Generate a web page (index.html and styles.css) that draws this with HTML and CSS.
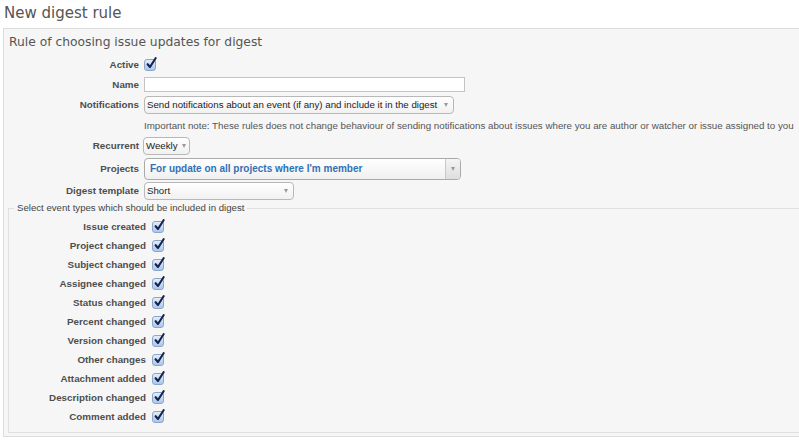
FILE: index.html
```html
<!DOCTYPE html>
<html>
<head>
<meta charset="utf-8">
<title>New digest rule</title>
<link rel="stylesheet" href="styles.css">
</head>
<body>
<h2 class="title">New digest rule</h2>
<div class="box">
  <h3 class="box-title">Rule of choosing issue updates for digest</h3>
  <div class="row r-active"><label>Active</label><span class="cb"><svg viewBox="0 0 12 14" width="12" height="14"><path d="M2.6 8.2 L5 11 L10.6 2.2" fill="none" stroke="#14224e" stroke-width="2.1" stroke-linecap="round" stroke-linejoin="round"/></svg></span></div>
  <div class="row r-name"><label>Name</label><span class="input"></span></div>
  <div class="row r-notif"><label>Notifications</label><span class="select s-notif"><span class="stext">Send notifications about an event (if any) and include it in the digest</span><span class="caret"></span></span></div>
  <div class="row r-note"><span class="note">Important note: These rules does not change behaviour of sending notifications about issues where you are author or watcher or issue assigned to you</span></div>
  <div class="row r-rec"><label>Recurrent</label><span class="select s-rec"><span class="stext">Weekly</span><span class="caret"></span></span></div>
  <div class="row r-proj"><label>Projects</label><span class="select2"><span class="s2text">For update on all projects where I'm member</span><span class="s2arrow"><span class="caret"></span></span></span></div>
  <div class="row r-tpl"><label>Digest template</label><span class="select s-tpl"><span class="stext">Short</span><span class="caret"></span></span></div>

  <fieldset class="events">
    <legend>Select event types which should be included in digest</legend>
    <div class="row ev"><label>Issue created</label><span class="cb"><svg viewBox="0 0 12 14" width="12" height="14"><path d="M2.6 8.2 L5 11 L10.6 2.2" fill="none" stroke="#14224e" stroke-width="2.1" stroke-linecap="round" stroke-linejoin="round"/></svg></span></div>
    <div class="row ev"><label>Project changed</label><span class="cb"><svg viewBox="0 0 12 14" width="12" height="14"><path d="M2.6 8.2 L5 11 L10.6 2.2" fill="none" stroke="#14224e" stroke-width="2.1" stroke-linecap="round" stroke-linejoin="round"/></svg></span></div>
    <div class="row ev"><label>Subject changed</label><span class="cb"><svg viewBox="0 0 12 14" width="12" height="14"><path d="M2.6 8.2 L5 11 L10.6 2.2" fill="none" stroke="#14224e" stroke-width="2.1" stroke-linecap="round" stroke-linejoin="round"/></svg></span></div>
    <div class="row ev"><label>Assignee changed</label><span class="cb"><svg viewBox="0 0 12 14" width="12" height="14"><path d="M2.6 8.2 L5 11 L10.6 2.2" fill="none" stroke="#14224e" stroke-width="2.1" stroke-linecap="round" stroke-linejoin="round"/></svg></span></div>
    <div class="row ev"><label>Status changed</label><span class="cb"><svg viewBox="0 0 12 14" width="12" height="14"><path d="M2.6 8.2 L5 11 L10.6 2.2" fill="none" stroke="#14224e" stroke-width="2.1" stroke-linecap="round" stroke-linejoin="round"/></svg></span></div>
    <div class="row ev"><label>Percent changed</label><span class="cb"><svg viewBox="0 0 12 14" width="12" height="14"><path d="M2.6 8.2 L5 11 L10.6 2.2" fill="none" stroke="#14224e" stroke-width="2.1" stroke-linecap="round" stroke-linejoin="round"/></svg></span></div>
    <div class="row ev"><label>Version changed</label><span class="cb"><svg viewBox="0 0 12 14" width="12" height="14"><path d="M2.6 8.2 L5 11 L10.6 2.2" fill="none" stroke="#14224e" stroke-width="2.1" stroke-linecap="round" stroke-linejoin="round"/></svg></span></div>
    <div class="row ev"><label>Other changes</label><span class="cb"><svg viewBox="0 0 12 14" width="12" height="14"><path d="M2.6 8.2 L5 11 L10.6 2.2" fill="none" stroke="#14224e" stroke-width="2.1" stroke-linecap="round" stroke-linejoin="round"/></svg></span></div>
    <div class="row ev"><label>Attachment added</label><span class="cb"><svg viewBox="0 0 12 14" width="12" height="14"><path d="M2.6 8.2 L5 11 L10.6 2.2" fill="none" stroke="#14224e" stroke-width="2.1" stroke-linecap="round" stroke-linejoin="round"/></svg></span></div>
    <div class="row ev"><label>Description changed</label><span class="cb"><svg viewBox="0 0 12 14" width="12" height="14"><path d="M2.6 8.2 L5 11 L10.6 2.2" fill="none" stroke="#14224e" stroke-width="2.1" stroke-linecap="round" stroke-linejoin="round"/></svg></span></div>
    <div class="row ev"><label>Comment added</label><span class="cb"><svg viewBox="0 0 12 14" width="12" height="14"><path d="M2.6 8.2 L5 11 L10.6 2.2" fill="none" stroke="#14224e" stroke-width="2.1" stroke-linecap="round" stroke-linejoin="round"/></svg></span></div>
  </fieldset>
</div>
</body>
</html>
```
FILE: styles.css
```css
html, body {
  margin: 0;
  padding: 0;
  background: #fff;
  overflow: hidden;
}
body {
  font-family: "Liberation Sans", Arial, sans-serif;
  color: #444;
}
.title {
  margin: 0 0 5px 0;
  padding: 3px 0 0 4px;
  font-family: "DejaVu Sans", Verdana, sans-serif;
  font-size: 15px;
  line-height: 20px;
  font-weight: normal;
  color: #555;
}
.box {
  margin: 0 -20px 0 3px;
  border: 1px solid #dcdcdc;
  background: #f6f6f6;
}
.box-title {
  margin: 0;
  padding: 6px 0 6px 5px;
  font-family: "DejaVu Sans", Verdana, sans-serif;
  font-size: 12.3px;
  line-height: 14px;
  font-weight: normal;
  color: #555;
}
.row {
  display: flex;
  align-items: center;
}
.row label {
  flex: none;
  width: 135px;
  margin-right: 5px;
  text-align: right;
  font-weight: bold;
  font-size: 9.8px;
  color: #4e4e4e;
}
.r-active { height: 19px; }
.r-name { height: 20px; }
.r-notif { height: 21px; }
.r-note { height: 20px; padding-left: 140px; }
.r-rec { height: 21px; }
.r-proj { height: 25px; }
.r-tpl { height: 19px; }

.cb {
  position: relative;
  flex: none;
  width: 10px;
  height: 10px;
  border: 1px solid #8ca6ca;
  border-radius: 3px;
  background: linear-gradient(#e3edf9, #a9c7ec);
}
.cb svg {
  position: absolute;
  left: 0;
  top: -4px;
}
.input {
  display: block;
  width: 321px;
  height: 15px;
  box-sizing: border-box;
  border: 1px solid #c4c4c4;
  background: #fff;
}
.select {
  display: flex;
  align-items: center;
  gap: 4px;
  box-sizing: border-box;
  height: 18px;
  border: 1px solid #b8b8b8;
  border-radius: 4px;
  background: linear-gradient(#ffffff, #f1f1f1);
  padding: 0 5px 0 2px;
  font-size: 9.7px;
  color: #222;
}
.stext { flex: 1; white-space: nowrap; }
.caret {
  flex: none;
  width: 0;
  height: 0;
  border-left: 2.5px solid transparent;
  border-right: 2.5px solid transparent;
  border-top: 4px solid #9a9a9a;
}
.s-notif { width: 310px; }
.s-rec { width: 47px; margin-left: -1px; }
.s-tpl { width: 150px; }
.note {
  font-size: 9.75px;
  color: #555;
  white-space: nowrap;
}
.select2 {
  display: flex;
  align-items: stretch;
  box-sizing: border-box;
  width: 317px;
  height: 22px;
  border: 1px solid #aaa;
  border-radius: 4px;
  background: linear-gradient(#ffffff, #f0f0f0);
  overflow: hidden;
}
.s2text {
  flex: 1;
  display: flex;
  align-items: center;
  padding-left: 5px;
  font-size: 10px;
  font-weight: bold;
  color: #3271b5;
  white-space: nowrap;
}
.s2arrow {
  flex: none;
  width: 14px;
  display: flex;
  align-items: center;
  justify-content: center;
  border-left: 1px solid #c8c8c8;
  background: linear-gradient(#f4f4f4, #dedede);
}
.events {
  margin: 2px 1px 3px 4px;
  padding: 3px 0 6px 0;
  border: 1px solid #e0e0e0;
  min-width: 0;
}
.events legend {
  margin-left: 5px;
  padding: 0 3px;
  font-size: 9.65px;
  line-height: 12px;
  color: #444;
}
.ev { height: 19px; }
.ev label {
  width: 137px;
  margin-right: 6px;
}
```
